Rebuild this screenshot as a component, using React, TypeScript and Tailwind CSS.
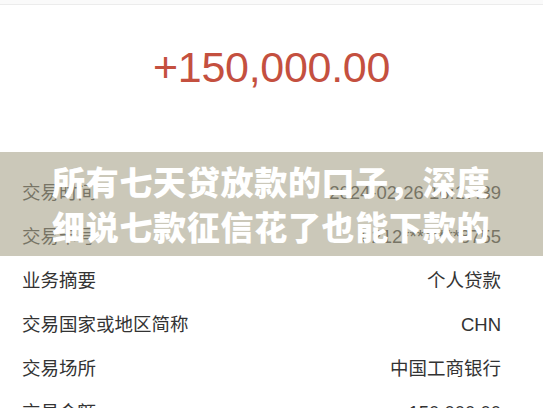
const rows: [string, string][] = [
  ["交易时间", "2024-02-26 16:17:39"],
  ["交易卡号", "6212********8755"],
  ["业务摘要", "个人贷款"],
  ["交易国家或地区简称", "CHN"],
  ["交易场所", "中国工商银行"],
  ["交易金额", "150,000.00"],
];

export default function App() {
  return (
    <div
      className="relative w-[543px] h-[408px] overflow-hidden bg-white"
      style={{ fontFamily: '"Liberation Sans", "Noto Sans CJK SC", sans-serif' }}
    >
      <div className="h-[4px] bg-[#fafafa]" />
      <div className="h-px bg-[#ececec]" />

      {/* amount */}
      <div className="h-[166px] pt-[36px] flex justify-center">
        <span className="text-[43px] leading-[52px] text-[#c4503f] tracking-[-0.3px]">
          +150,000.00
        </span>
      </div>

      {/* detail rows */}
      <div className="flex flex-col">
        {rows.map(([label, value]) => (
          <div
            key={label}
            className="h-[44px] flex items-center justify-between pl-[22px] pr-[42px] text-[18.5px] text-[#333333]"
          >
            <span>{label}</span>
            <span>{value}</span>
          </div>
        ))}
      </div>

      {/* title banner over the page */}
      <div className="absolute left-0 right-0 top-[152px] h-[104px] bg-[rgba(167,162,136,0.59)] flex flex-col justify-center pl-[52px]">
        <p
          className="text-white text-[33px] leading-[45px] font-black tracking-[0.7px] whitespace-nowrap"
          style={{ fontFamily: '"Noto Sans CJK SC", sans-serif' }}
        >
          所有七天贷放款的口子，深度
        </p>
        <p
          className="text-white text-[33px] leading-[45px] font-black tracking-[0.7px] whitespace-nowrap"
          style={{ fontFamily: '"Noto Sans CJK SC", sans-serif' }}
        >
          细说七款征信花了也能下款的
        </p>
      </div>
    </div>
  );
}
